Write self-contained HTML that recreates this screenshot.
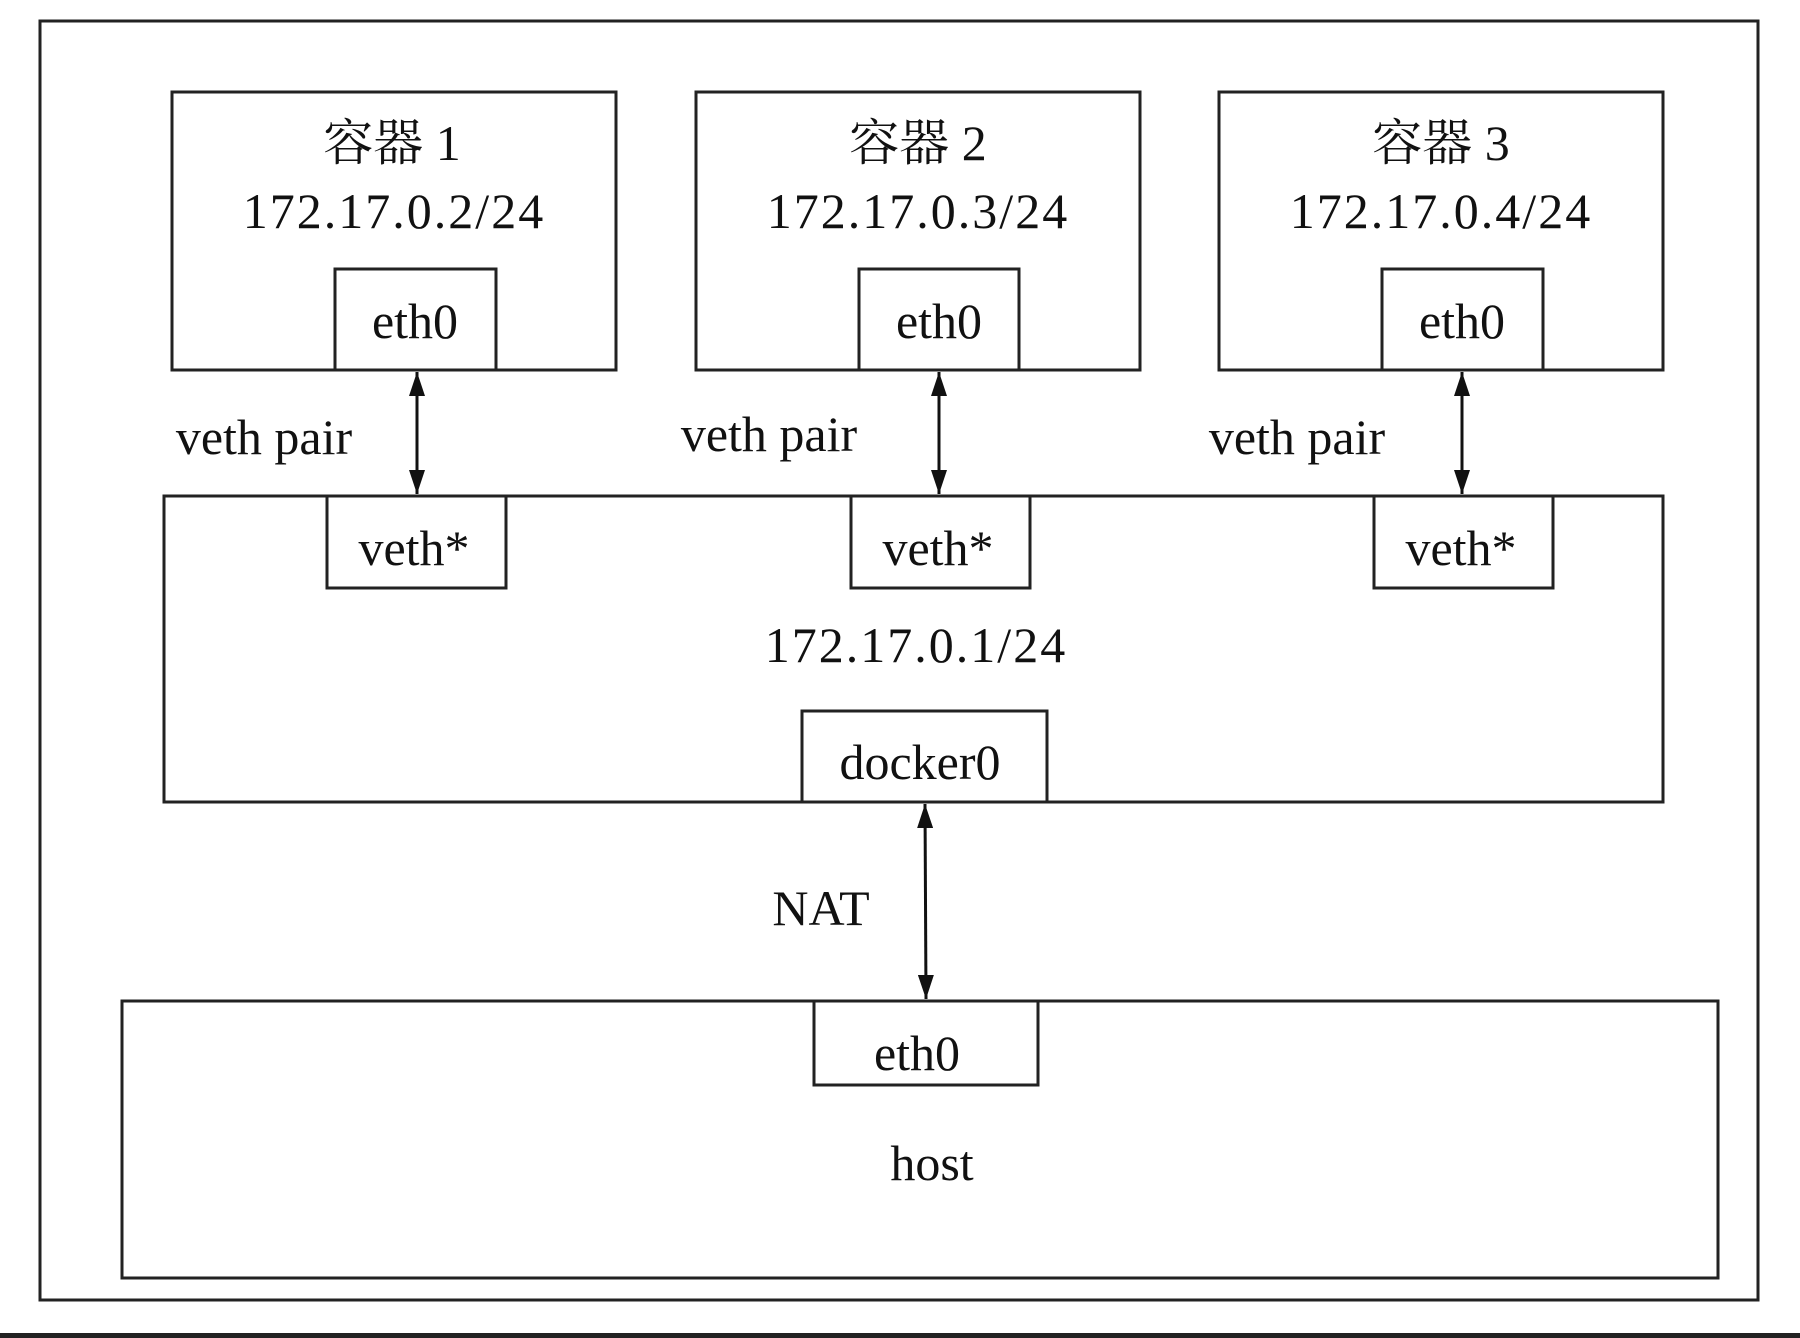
<!DOCTYPE html>
<html><head><meta charset="utf-8"><style>
html,body{margin:0;padding:0;background:#fff;}
svg{display:block;}
text{font-family:"Liberation Serif","Noto Serif CJK SC",serif;fill:#111;text-anchor:middle;dominant-baseline:central;}
</style></head><body>
<svg width="1800" height="1338" viewBox="0 0 1800 1338" xmlns="http://www.w3.org/2000/svg">
<defs>
<marker id="ah" viewBox="0 0 24 16" refX="24" refY="8" markerWidth="24" markerHeight="16" markerUnits="userSpaceOnUse" orient="auto-start-reverse">
<path d="M0,0 L24,8 L0,16 z" fill="#111"/>
</marker>
</defs>
<rect x="0" y="0" width="1800" height="1338" fill="#fff"/>
<rect x="0" y="1333" width="1800" height="5" fill="#222"/>
<g fill="none" stroke="#222" stroke-width="3">
<rect x="40" y="21" width="1718" height="1279"/>
<rect x="172" y="92" width="444" height="278"/>
<rect x="696" y="92" width="444" height="278"/>
<rect x="1219" y="92" width="444" height="278"/>
<rect x="335" y="269" width="161" height="101"/>
<rect x="859" y="269" width="160" height="101"/>
<rect x="1382" y="269" width="161" height="101"/>
<rect x="164" y="496" width="1499" height="306"/>
<rect x="327" y="496" width="179" height="92"/>
<rect x="851" y="496" width="179" height="92"/>
<rect x="1374" y="496" width="179" height="92"/>
<rect x="802" y="711" width="245" height="91"/>
<rect x="122" y="1001" width="1596" height="277"/>
<rect x="814" y="1001" width="224" height="84"/>
</g>
<g stroke="#111" stroke-width="3">
<line x1="417" y1="372" x2="417" y2="494" marker-start="url(#ah)" marker-end="url(#ah)"/>
<line x1="939" y1="372" x2="939" y2="494" marker-start="url(#ah)" marker-end="url(#ah)"/>
<line x1="1462" y1="372" x2="1462" y2="494" marker-start="url(#ah)" marker-end="url(#ah)"/>
<line x1="925" y1="804" x2="926" y2="999" marker-start="url(#ah)" marker-end="url(#ah)"/>
</g>
<g font-size="50">
<text x="392" y="143">容器 1</text>
<text x="918" y="143">容器 2</text>
<text x="1441" y="143">容器 3</text>
<text x="394" y="211" letter-spacing="2">172.17.0.2/24</text>
<text x="918" y="211" letter-spacing="2">172.17.0.3/24</text>
<text x="1441" y="211" letter-spacing="2">172.17.0.4/24</text>
<text x="415" y="321">eth0</text>
<text x="939" y="321">eth0</text>
<text x="1462" y="321">eth0</text>
<text x="264" y="437">veth pair</text>
<text x="769" y="434">veth pair</text>
<text x="1297" y="437">veth pair</text>
<text x="414" y="548">veth*</text>
<text x="938" y="548">veth*</text>
<text x="1461" y="548">veth*</text>
<text x="916" y="645" letter-spacing="2">172.17.0.1/24</text>
<text x="920" y="762">docker0</text>
<text x="821" y="908">NAT</text>
<text x="917" y="1053">eth0</text>
<text x="932" y="1163">host</text>
</g>
</svg>
</body></html>
